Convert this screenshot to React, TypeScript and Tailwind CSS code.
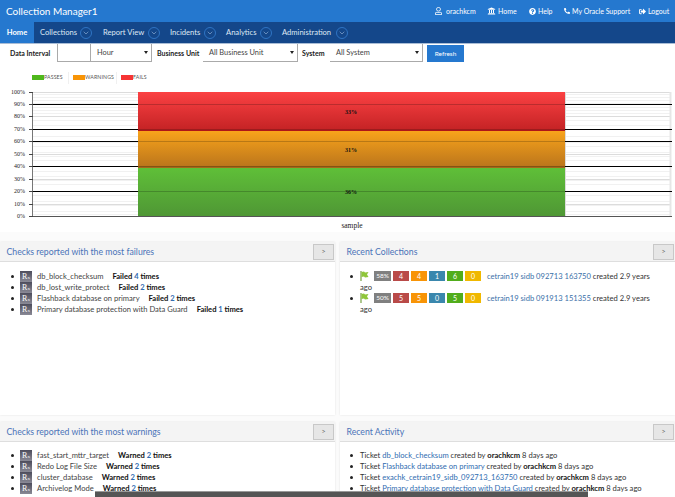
import { ChevronDown } from "lucide-react";
import { FaUniversity, FaQuestionCircle, FaPhone, FaSignOutAlt, FaRegUser } from "react-icons/fa";

const navItems = [
  { label: "Collections", ml: "ml-[6px]", gap: "ml-[3px]", w: "w-[37px]" },
  { label: "Report View", ml: "ml-[11px]", gap: "ml-[4px]", w: "w-[41px]" },
  { label: "Incidents", ml: "ml-[10px]", gap: "ml-[4px]", w: "w-[30px]" },
  { label: "Analytics", ml: "ml-[10px]", gap: "ml-[4px]", w: "w-[30px]" },
  { label: "Administration", ml: "ml-[10px]", gap: "ml-[4px]", w: "w-[50px]" },
];

const failures = [
  { name: "db_block_checksum", count: 4 },
  { name: "db_lost_write_protect", count: 2 },
  { name: "Flashback database on primary", count: 2 },
  { name: "Primary database protection with Data Guard", count: 1 },
];

const warnings = [
  { name: "fast_start_mttr_target", count: 2 },
  { name: "Redo Log File Size", count: 2 },
  { name: "cluster_database", count: 2 },
  { name: "Archivelog Mode", count: 2 },
];

const collections = [
  { pct: "58%", nums: [4, 4, 1, 6, 0], name: "cetrain19 sidb 092713 163750" },
  { pct: "50%", nums: [5, 5, 0, 5, 0], name: "cetrain19 sidb 091913 151355" },
];

const activity = [
  { name: "db_block_checksum" },
  { name: "Flashback database on primary" },
  { name: "exachk_cetrain19_sidb_092713_163750" },
  { name: "Primary database protection with Data Guard" },
];

const badgeColors = ["bg-[#b94a48]", "bg-[#f89406]", "bg-[#3a87ad]", "bg-[#51ad1c]", "bg-[#f0b800]"];

function RxIcon() {
  return (
    <span className="inline-flex h-[11px] w-[12px] shrink-0 items-center justify-center bg-gradient-to-b from-[#4d4d5c] to-[#8a8a96] font-['Liberation_Serif',serif] text-[8px] leading-none text-white">
      R<sub className="text-[5px] leading-none">x</sub>
    </span>
  );
}

function Flag() {
  return (
    <svg width="9" height="10" viewBox="0 0 9 10" className="mr-[5px] inline align-top">
      <rect x="0.5" y="0" width="1" height="10" fill="#5d8f1f" />
      <path d="M1.5 1 L4 0.5 L5 1.5 L8.5 1 L7 3.5 L8.5 6 L5 6.5 L4 5.5 L1.5 6 Z" fill="#8fc63a" />
    </svg>
  );
}

function Panel({ title, children, h }: { title: string; children: React.ReactNode; h: string }) {
  return (
    <div className={`flex flex-col bg-white shadow-[0_0_2px_rgba(0,0,0,0.1)] ${h}`}>
      <div className="flex h-[20px] shrink-0 items-center justify-between border-b border-[#dedede] bg-[#f4f4f4]">
        <span className="pl-[6.5px] text-[8.7px] text-[#4a73b8]">{title}</span>
        <span className="mr-[1px] flex h-[16px] w-[21px] items-center justify-center border border-[#c8c8c8] bg-[#e6e6e6] text-[7px] text-[#666]">
          &gt;
        </span>
      </div>
      {children}
    </div>
  );
}

function Chart() {
  const w = 675;
  const ticks = [100, 90, 80, 70, 60, 50, 40, 30, 20, 10, 0];
  const y = (p: number) => 216 - (p / 100) * 124.4;
  const black = [90, 70, 60, 40, 20];
  const faint = [100, 80, 50, 30, 10];
  return (
    <svg width={w} height={147} viewBox={`0 85 ${w} 147`} className="block">
      <defs>
        <linearGradient id="red" x1="0" y1="0" x2="0" y2="1">
          <stop offset="0" stopColor="#fb4143" />
          <stop offset="1" stopColor="#c32224" />
        </linearGradient>
        <linearGradient id="orange" x1="0" y1="0" x2="0" y2="1">
          <stop offset="0" stopColor="#f8a31b" />
          <stop offset="1" stopColor="#b9741c" />
        </linearGradient>
        <linearGradient id="green" x1="0" y1="0" x2="0" y2="1">
          <stop offset="0" stopColor="#5fbf38" />
          <stop offset="1" stopColor="#4f9735" />
        </linearGradient>
      </defs>
      {[94, 97, 100, 103, 107, 110, 113, 116, 120, 125, 136, 142, 146, 152, 156, 160, 171, 176, 180, 184, 195, 201, 205, 211, 214].map((g) => (
        <line key={g} x1="33" x2="671" y1={g + 0.5} y2={g + 0.5} stroke="#f1f1f1" />
      ))}
      {faint.map((p) => (
        <line key={p} x1="33" x2="671" y1={Math.round(y(p)) + 0.5} y2={Math.round(y(p)) + 0.5} stroke="#dcdcdc" />
      ))}
      <line x1="670.5" x2="670.5" y1="92" y2="216" stroke="#e6e6e6" strokeWidth="2" />
      <rect x="138" y="92" width="427" height="39" fill="url(#red)" />
      <rect x="138" y="131" width="427" height="37" fill="url(#orange)" />
      <rect x="138" y="168" width="427" height="48" fill="url(#green)" />
      <rect x="138" y="130" width="427" height="1" fill="#ae1518" />
      <rect x="138" y="166" width="427" height="2" fill="#a5681a" />
      <rect x="565" y="92" width="1" height="124" fill="#dcdcdc" />
      {black.map((p) => (
        <g key={p}>
          <line x1="33" x2="138" y1={Math.round(y(p)) + 0.5} y2={Math.round(y(p)) + 0.5} stroke="#000" />
          <line x1="565" x2="672" y1={Math.round(y(p)) + 0.5} y2={Math.round(y(p)) + 0.5} stroke="#000" />
          <line x1="138" x2="565" y1={Math.round(y(p)) + 0.5} y2={Math.round(y(p)) + 0.5} stroke="#000" strokeOpacity="0.2" />
        </g>
      ))}
      <line x1="32.5" x2="32.5" y1="92" y2="216" stroke="#777" />
      <line x1="29" x2="672" y1="216.5" y2="216.5" stroke="#555" />
      {ticks.map((t) => (
        <g key={t}>
          <line x1="29" x2="33" y1={Math.round(y(t)) + 0.5} y2={Math.round(y(t)) + 0.5} stroke="#444" />
          <text x="25" y={y(t) + 2} textAnchor="end" fontSize="6" fontFamily="'Liberation Serif', serif" fill="#222">
            {t}%
          </text>
        </g>
      ))}
      <g fontSize="6" fontFamily="'Liberation Serif', serif" fontWeight="bold" fill="#111" textAnchor="middle">
        <text x="351" y="114">33%</text>
        <text x="351" y="152">31%</text>
        <text x="351" y="194">36%</text>
      </g>
      <text x="352" y="228" fontSize="7.5" fontFamily="'Liberation Serif', serif" fill="#222" textAnchor="middle">
        sample
      </text>
    </svg>
  );
}

export default function App() {
  return (
    <div className="relative h-[497px] w-[675px] overflow-hidden bg-[#fbfbfb] font-['Lato',sans-serif] text-[#333]">
      {/* top bar */}
      <header className="flex h-[22px] items-center justify-between bg-[#2578cf] text-white">
        <span className="pl-[6px] text-[10px]">Collection Manager1</span>
        <div className="flex items-center pr-[6px] text-[7px] whitespace-nowrap">
          <FaRegUser className="h-[8px] w-[7px]" />
          <span className="ml-[4px] w-[28px]">orachkcm</span>
          <FaUniversity className="ml-[13px] h-[8px] w-[9px]" />
          <span className="ml-[2px] w-[18px]">Home</span>
          <FaQuestionCircle className="ml-[13px] h-[7px] w-[7px]" />
          <span className="ml-[2px] w-[13px]">Help</span>
          <FaPhone className="ml-[13px] h-[6px] w-[6px] -scale-x-100" />
          <span className="ml-[2px] w-[54px]">My Oracle Support</span>
          <FaSignOutAlt className="ml-[13px] h-[7px] w-[7px]" />
          <span className="ml-[2px] w-[21px]">Logout</span>
        </div>
      </header>

      {/* nav */}
      <nav className="flex h-[21px] items-stretch bg-[#14478a] text-[7.6px] text-white">
        <div className="flex w-[34px] items-center justify-center bg-[#2578cf] font-bold">Home</div>
        {navItems.map((n) => (
          <div key={n.label} className={`flex items-center ${n.ml}`}>
            <span className={`whitespace-nowrap text-[#dfe8f4] ${n.w}`}>{n.label}</span>
            <span className={`flex h-[12px] w-[12px] items-center justify-center rounded-full border border-[#2f74c4] ${n.gap}`}>
              <ChevronDown size={8} strokeWidth={1.5} className="text-[#b9d0ec]" />
            </span>
          </div>
        ))}
      </nav>

      {/* filters */}
      <div className="flex h-[19px] items-stretch border-t border-[#a9bdd6] bg-white text-[7.4px] shadow-[0_1px_1px_rgba(0,0,0,0.06)]">
        <span className="ml-[10px] flex w-[40px] items-center pt-[1px] text-[7px] font-bold whitespace-nowrap text-[#222]">Data Interval</span>
        <div className="ml-[7px] w-[34px] border-b border-l border-r border-[#aaa]" />
        <Select w="w-[61px]" label="Hour" />
        <span className="ml-[5px] flex w-[41px] items-center pt-[1px] text-[7px] font-bold whitespace-nowrap text-[#222]">Business Unit</span>
        <div className="ml-[5px]" />
        <Select w="w-[95px]" label="All Business Unit" />
        <span className="ml-[4px] flex w-[22px] items-center pt-[1px] text-[7px] font-bold text-[#222]">System</span>
        <div className="ml-[6px]" />
        <Select w="w-[93px]" label="All System" />
        <button className="mt-[1px] ml-[4px] w-[37px] bg-[#2578cf] text-[6.5px] text-white">Refresh</button>
      </div>

      {/* chart */}
      <section className="bg-white">
        <div className="flex h-[23px] items-center pl-[32px] pt-[8px] text-[5.2px] tracking-[0.15px] text-[#555]">
          <i className="h-[5px] w-[12px] bg-[#4fb81c]" />
          <span className="w-[19px]">PASSES</span>
          <i className="ml-[5px] h-[12px] w-px bg-[#f0f0f0]" />
          <i className="ml-[4px] h-[5px] w-[12px] bg-[#f89406]" />
          <span className="w-[28px]">WARNINGS</span>
          <i className="ml-[3px] h-[12px] w-px bg-[#f0f0f0]" />
          <i className="ml-[4px] h-[5px] w-[12px] bg-[#f63434]" />
          <span>FAILS</span>
        </div>
        <Chart />
      </section>

      {/* panels */}
      <div className="mt-[10px] grid grid-cols-[335px_335px] gap-x-[5px] gap-y-[7px] text-[7.6px]">
        <Panel title="Checks reported with the most failures" h="h-[173px]">
          <ul className="pl-[12px] pt-[9px] leading-[11px]">
            {failures.map((f) => (
              <Row key={f.name} name={f.name} verb="Failed" count={f.count} gap="ml-[9px]" />
            ))}
          </ul>
        </Panel>
        <Panel title="Recent Collections" h="h-[173px]">
          <ul className="pl-[11px] pt-[9px] leading-[11px]">
            {collections.map((c) => (
              <li key={c.name} className="relative pr-[20px] pl-[9px]">
                <span className="absolute left-[-1px] top-[4px] h-[3px] w-[3px] rounded-full bg-[#222]" />
                <Flag />
                <span className="mr-[2px] inline-block h-[10px] w-[17px] bg-[#808080] text-center align-top text-[6.5px] leading-[10px] text-white">
                  {c.pct}
                </span>
                {c.nums.map((n, i) => (
                  <span
                    key={i}
                    className={`mr-[2px] inline-block h-[10px] w-[16px] text-center align-top text-[7px] leading-[10px] text-white ${badgeColors[i]}`}
                  >
                    {n}
                  </span>
                ))}
                <span className="ml-[4px] text-[#3a6fa8]">{c.name}</span> created 2.9 years ago
              </li>
            ))}
          </ul>
        </Panel>
        <Panel title="Checks reported with the most warnings" h="h-[76px]">
          <ul className="pl-[12px] pt-[8px] leading-[11px]">
            {warnings.map((f) => (
              <Row key={f.name} name={f.name} verb="Warned" count={f.count} gap="ml-[9px]" />
            ))}
          </ul>
        </Panel>
        <Panel title="Recent Activity" h="h-[76px]">
          <ul className="pl-[11px] pt-[8px] leading-[11px]">
            {activity.map((a) => (
              <li key={a.name} className="relative pl-[9px] whitespace-nowrap">
                <span className="absolute left-[-1px] top-[4px] h-[3px] w-[3px] rounded-full bg-[#222]" />
                Ticket <span className="text-[#2f6cb0]">{a.name}</span> created by <b className="text-[#111]">orachkcm</b> 8 days ago
              </li>
            ))}
          </ul>
        </Panel>
      </div>

      {/* horizontal scrollbar thumb */}
      <div className="absolute bottom-0 left-[95px] h-[6px] w-[493px] border-t border-[#999] bg-[#555]" />
    </div>
  );
}

function Select({ w, label }: { w: string; label: string }) {
  return (
    <div className={`relative flex items-center border-b border-r border-[#aaa] pl-[6px] pt-[1px] text-[#444] ${w}`}>
      {label}
      <span className="absolute right-[3px] top-[7px] h-0 w-0 border-x-[2px] border-t-[3px] border-x-transparent border-t-[#222]" />
    </div>
  );
}

function Row({ name, verb, count, gap }: { name: string; verb: string; count: number; gap: string }) {
  return (
    <li className="relative flex h-[11px] items-center pl-[8px] whitespace-nowrap">
      <span className="absolute left-[-1px] top-[4px] h-[3px] w-[3px] rounded-full bg-[#222]" />
      <RxIcon />
      <span className="ml-[5px] text-[#444]">{name}</span>
      <b className={`text-[#111] ${gap}`}>
        {verb} <span className="text-[#2f6cb0]">{count}</span> times
      </b>
    </li>
  );
}
